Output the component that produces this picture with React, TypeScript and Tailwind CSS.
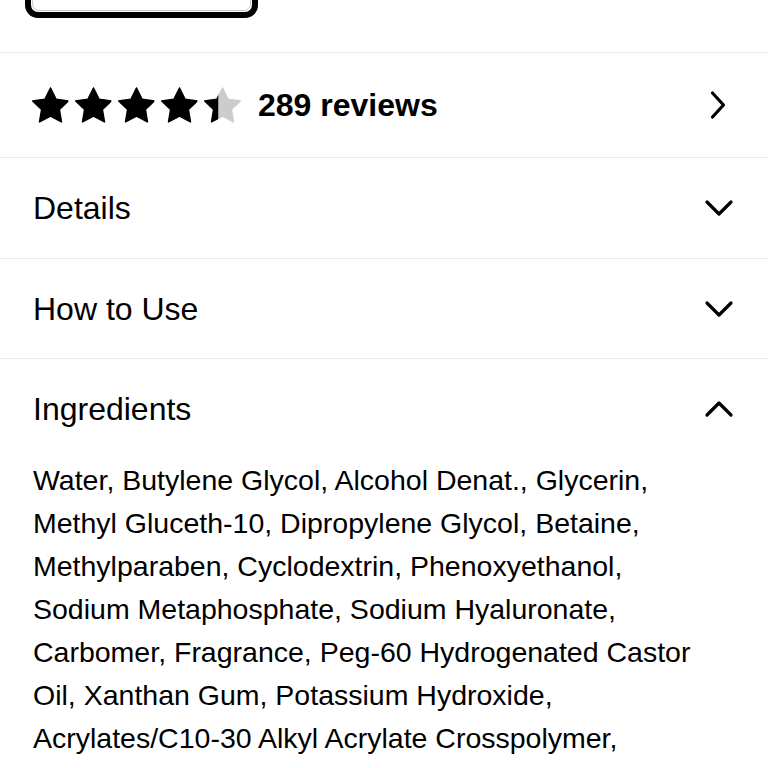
const INGREDIENTS =
  'Water, Butylene Glycol, Alcohol Denat., Glycerin, Methyl Gluceth-10, Dipropylene Glycol, Betaine, Methylparaben, Cyclodextrin, Phenoxyethanol, Sodium Metaphosphate, Sodium Hyaluronate, Carbomer, Fragrance, Peg-60 Hydrogenated Castor Oil, Xanthan Gum, Potassium Hydroxide, Acrylates/C10-30 Alkyl Acrylate Crosspolymer, Disodium EDTA, Sodium Citrate, Citric Acid';

const STAR_POINTS = '12,2 15.09,8.26 22,9.27 17,14.14 18.18,21.02 12,17.77 5.82,21.02 7,14.14 2,9.27 8.91,8.26';

function Star({ fill = 1, id }: { fill?: number; id: string }) {
  return (
    <svg width="37" height="36" viewBox="1.6 1.6 20.8 19.9" className="shrink-0">
      <defs>
        <clipPath id={id}>
          <rect x="0" y="0" width={2 + 20 * fill} height="24" />
        </clipPath>
      </defs>
      <polygon points={STAR_POINTS} fill="#cccccc" stroke="#cccccc" strokeWidth="0.8" strokeLinejoin="round" />
      <polygon
        points={STAR_POINTS}
        fill="#000"
        stroke="#000"
        strokeWidth="0.8"
        strokeLinejoin="round"
        clipPath={`url(#${id})`}
      />
    </svg>
  );
}

function ChevronRight() {
  return (
    <svg width="18" height="30" viewBox="0 0 18 30" fill="none">
      <polyline points="3.5,3 14.5,15 3.5,27" stroke="#000" strokeWidth="3.2" strokeLinecap="round" strokeLinejoin="round" />
    </svg>
  );
}

function ChevronDown({ up = false }: { up?: boolean }) {
  return (
    <svg width="30" height="18" viewBox="0 0 30 18" fill="none" className={up ? 'rotate-180' : ''}>
      <polyline points="3,3 15,15 27,3" stroke="#000" strokeWidth="3.2" strokeLinecap="round" strokeLinejoin="round" />
    </svg>
  );
}

function Section({ title, open = false, h }: { title: string; open?: boolean; h: string }) {
  return (
    <div className={`flex items-center justify-between border-t border-[#e9e9e9] pl-[33px] pr-[34px] ${h}`}>
      <span className="text-[32px] text-black">{title}</span>
      <ChevronDown up={open} />
    </div>
  );
}

export default function App() {
  return (
    <div className="w-[768px] h-[768px] overflow-hidden bg-white text-black font-['Liberation_Sans',Arial,sans-serif]">
      {/* Add to bag button, mostly scrolled off */}
      <div className="flex h-[52px] items-start pl-[25px]">
        <div className="-mt-[40px] h-[58px] w-[233px] rounded-[13px] border-[6px] border-black bg-white p-[1px]">
          <div className="h-full w-full rounded-[7px] border border-[#c8c8c8]" />
        </div>
      </div>

      {/* Rating */}
      <div className="flex h-[105px] items-center justify-between border-t border-[#e9e9e9] pl-[32px] pr-[41px]">
        <div className="flex items-center">
          <div className="flex items-center gap-[6px]">
            <Star id="s1" />
            <Star id="s2" />
            <Star id="s3" />
            <Star id="s4" />
            <Star id="s5" fill={0.38} />
          </div>
          <span className="ml-[17px] text-[32px] font-bold">289 reviews</span>
        </div>
        <ChevronRight />
      </div>

      <Section title="Details" h="h-[101px]" />
      <Section title="How to Use" h="h-[100px]" />
      <Section title="Ingredients" open h="h-[101px]" />

      <div className="pl-[33px] pr-[55px]">
        <p className="text-[28.5px] leading-[43px] text-black">{INGREDIENTS}</p>
      </div>
    </div>
  );
}
